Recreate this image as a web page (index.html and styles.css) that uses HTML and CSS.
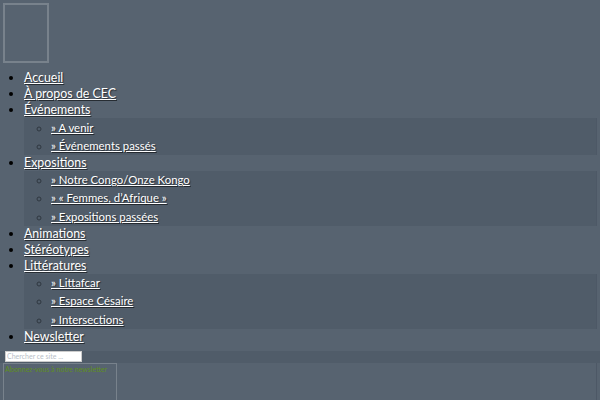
FILE: index.html
```html
<!DOCTYPE html>
<html lang="fr">
<head>
<meta charset="utf-8">
<link rel="stylesheet" href="styles.css">
</head>
<body>
<div class="logo"></div>
<ul class="menu">
  <li><a href="#">Accueil</a></li>
  <li><a href="#">À propos de CEC</a></li>
  <li><a href="#">Événements</a>
    <ul class="sub">
      <li><a href="#">» A venir</a></li>
      <li><a href="#">» Événements passés</a></li>
    </ul>
  </li>
  <li><a href="#">Expositions</a>
    <ul class="sub">
      <li><a href="#">» Notre Congo/Onze Kongo</a></li>
      <li><a href="#">» « Femmes, d’Afrique »</a></li>
      <li><a href="#">» Expositions passées</a></li>
    </ul>
  </li>
  <li><a href="#">Animations</a></li>
  <li><a href="#">Stéréotypes</a></li>
  <li><a href="#">Littératures</a>
    <ul class="sub">
      <li><a href="#">» Littafcar</a></li>
      <li><a href="#">» Espace Césaire</a></li>
      <li><a href="#">» Intersections</a></li>
    </ul>
  </li>
  <li><a href="#">Newsletter</a></li>
</ul>
<div class="searchbar">
  <input class="search" type="text" placeholder="Chercher ce site ...">
</div>
<div class="bottom">
  <div class="box"><span class="green">Abonnez-vous à notre newsletter</span></div>
  <div class="edge"></div>
</div>
</body>
</html>
```
FILE: styles.css
```css
html, body {
  margin: 0;
  padding: 0;
  background: #576370;
  height: 100%;
  overflow: hidden;
}
body {
  font-family: Lato, "Open Sans", sans-serif;
  color: #fff;
}
.logo {
  margin: 3px 0 0 3px;
  width: 42px;
  height: 56px;
  border: 2px solid #78828c;
}
.menu {
  list-style: disc;
  margin: 7px 4px 0 0;
  padding: 0 0 0 24px;
  color: #000;
}
.menu > li {
  font-size: 12.4px;
  line-height: 16px;
}
.menu a {
  color: #fff;
  text-decoration: underline;
  text-shadow: 1px 1px 1px rgba(0,0,0,0.55);
}
.sub {
  list-style: circle;
  margin: 0;
  padding: 0 0 0 27px;
  background: #505c69;
  box-shadow: 1px 0 0 #4d5866;
  color: #2f3740;
}
.sub > li {
  font-size: 11.4px;
  line-height: 16.83px;
  padding-top: 1.5px;
}
.searchbar {
  margin-top: 6px;
  height: 12px;
  background: #505c69;
  display: flex;
  align-items: flex-start;
}
.search {
  margin: 0 0 0 5px;
  width: 77px;
  height: 11px;
  box-sizing: border-box;
  border: 1px solid #ccc;
  padding: 0 1px;
  font-family: Lato, sans-serif;
  font-size: 7px;
  background: #fff;
}
.search::placeholder {
  color: #b8c0c8;
}
.bottom {
  display: flex;
  justify-content: space-between;
}
.box {
  margin-left: 3px;
  width: 110px;
  height: 36px;
  border: 1px solid #78828c;
  border-bottom: none;
  padding: 1px;
}
.green {
  color: #5f8f1e;
  font-size: 7px;
  line-height: 8px;
  display: block;
}
.edge {
  width: 1px;
  height: 37px;
  margin-right: 3px;
  background: #4d5866;
}
```
